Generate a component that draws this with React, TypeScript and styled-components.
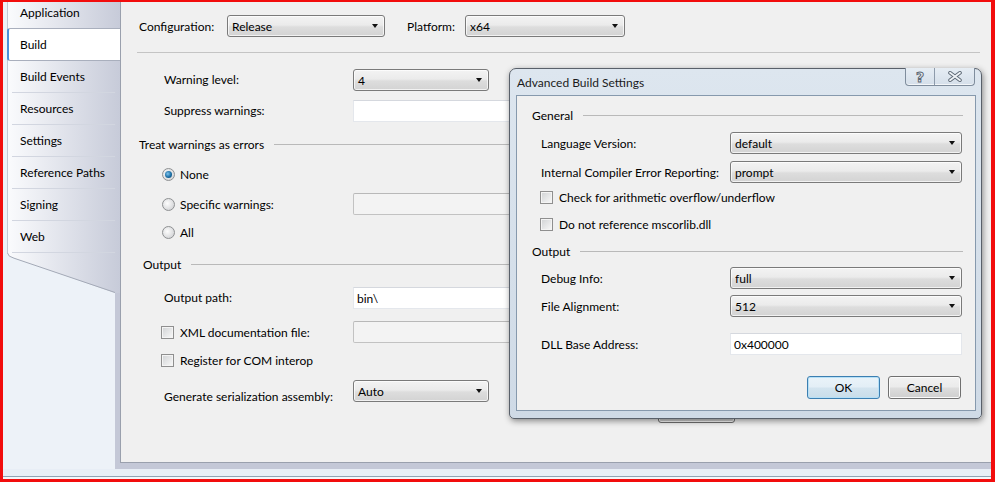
import React from "react";
import styled, { createGlobalStyle } from "styled-components";

const GlobalStyle = createGlobalStyle`
  html, body {
    margin: 0;
    padding: 0;
  }
  body {
    font-family: "Lato", "Liberation Sans", sans-serif;
    font-size: 12px;
    color: #000;
  }
  * {
    box-sizing: border-box;
  }
`;

const tabs = [
  "Application",
  "Build",
  "Build Events",
  "Resources",
  "Settings",
  "Reference Paths",
  "Signing",
  "Web",
];

const App: React.FC = () => {
  return (
    <Window>
      <GlobalStyle />
      <MainRow>
        <Sidebar>
          <TabStrip>
            {tabs.map((tab) => (
              <Tab key={tab} $active={tab === "Build"}>
                {tab}
              </Tab>
            ))}
          </TabStrip>
          <Tail width="117" height="40" viewBox="0 0 117 40">
            <defs>
              <linearGradient id="tailFill" x1="4" y1="0" x2="117" y2="0" gradientUnits="userSpaceOnUse">
                <stop offset="0" stopColor="#fafbfd" />
                <stop offset="1" stopColor="#c7cbd9" />
              </linearGradient>
            </defs>
            <path d="M4,0 H117 V40 H112 L11,5 Q4.5,3.5 4,0 Z" fill="url(#tailFill)" />
            <path d="M4.5,0 Q4.8,3.6 11,5.2 L112,39.5" fill="none" stroke="#a3a9b6" />
          </Tail>
        </Sidebar>
        <PanelFrame>
          <Panel>
            <ConfigRow>
              <ConfigLabel $width={88}>Configuration:</ConfigLabel>
              <Select $width={158} value="Release" />
              <ConfigLabel $width={58} $gap={22}>
                Platform:
              </ConfigLabel>
              <Select $width={160} value="x64" />
            </ConfigRow>
            <Separator />

            <FormRow $top={16}>
              <FieldLabel>Warning level:</FieldLabel>
              <Select $width={136} value="4" />
            </FormRow>
            <FormRow $top={9}>
              <FieldLabel>Suppress warnings:</FieldLabel>
              <TextBox $width={420} />
            </FormRow>

            <GroupHeader $top={12} $indent={2}>
              <span>Treat warnings as errors</span>
              <GroupLine />
            </GroupHeader>
            <FormRow $top={9}>
              <OptionCell $indent={25} $width={216}>
                <Radio $checked />
                None
              </OptionCell>
            </FormRow>
            <FormRow $top={8}>
              <OptionCell $indent={25} $width={216}>
                <Radio />
                Specific warnings:
              </OptionCell>
              <TextBox $width={420} $disabled />
            </FormRow>
            <FormRow $top={6}>
              <OptionCell $indent={25} $width={216}>
                <Radio />
                All
              </OptionCell>
            </FormRow>

            <GroupHeader $top={11} $indent={6}>
              <span>Output</span>
              <GroupLine />
            </GroupHeader>
            <FormRow $top={13}>
              <FieldLabel>Output path:</FieldLabel>
              <TextBox $width={420}>bin\</TextBox>
            </FormRow>
            <FormRow $top={12}>
              <OptionCell $indent={24} $width={216}>
                <Checkbox />
                XML documentation file:
              </OptionCell>
              <TextBox $width={420} $disabled />
            </FormRow>
            <FormRow $top={6}>
              <OptionCell $indent={24} $width={216}>
                <Checkbox />
                Register for COM interop
              </OptionCell>
            </FormRow>
            <FormRow $top={9}>
              <FieldLabel $drop={12}>Generate serialization assembly:</FieldLabel>
              <Select $width={136} value="Auto" />
            </FormRow>
            <AdvancedRow>
              <PushButton $width={77} $height={21}>
                Advanced...
              </PushButton>
            </AdvancedRow>
          </Panel>
        </PanelFrame>
      </MainRow>
      <Footer />

      <Dialog>
        <TitleBar>
          <Title>Advanced Build Settings</Title>
          <CaptionGroup>
            <CaptionButton $width={28}>
              <HelpGlyph>?</HelpGlyph>
            </CaptionButton>
            <CaptionButton $width={40} $last>
              <svg width="14" height="11" viewBox="0 0 14 11">
                <path d="M2,1.8 L12,9.2 M12,1.8 L2,9.2" stroke="#5d6875" strokeWidth="3.6" strokeLinecap="round" />
                <path d="M2,1.8 L12,9.2 M12,1.8 L2,9.2" stroke="#eef2f6" strokeWidth="1.8" strokeLinecap="round" />
              </svg>
            </CaptionButton>
          </CaptionGroup>
        </TitleBar>
        <Client>
          <GroupHeader $top={9} $indent={0}>
            <span>General</span>
            <GroupLine />
          </GroupHeader>
          <FormRow $top={7}>
            <DialogLabel>Language Version:</DialogLabel>
            <Select $width={232} value="default" />
          </FormRow>
          <FormRow $top={7}>
            <DialogLabel>Internal Compiler Error Reporting:</DialogLabel>
            <Select $width={232} value="prompt" />
          </FormRow>
          <FormRow $top={3}>
            <OptionCell $indent={8}>
              <Checkbox />
              Check for arithmetic overflow/underflow
            </OptionCell>
          </FormRow>
          <FormRow $top={5}>
            <OptionCell $indent={8}>
              <Checkbox />
              Do not reference mscorlib.dll
            </OptionCell>
          </FormRow>

          <GroupHeader $top={6} $indent={0}>
            <span>Output</span>
            <GroupLine />
          </GroupHeader>
          <FormRow $top={6}>
            <DialogLabel>Debug Info:</DialogLabel>
            <Select $width={232} value="full" />
          </FormRow>
          <FormRow $top={6}>
            <DialogLabel>File Alignment:</DialogLabel>
            <Select $width={232} value="512" />
          </FormRow>
          <FormRow $top={16}>
            <DialogLabel>DLL Base Address:</DialogLabel>
            <TextBox $width={232}>0x400000</TextBox>
          </FormRow>

          <ButtonRow>
            <PushButton $width={73} $height={23} $default>
              OK
            </PushButton>
            <PushButton $width={73} $height={23}>
              Cancel
            </PushButton>
          </ButtonRow>
        </Client>
      </Dialog>
    </Window>
  );
};

export default App;

interface SelectProps {
  $width: number;
  value: string;
}

const Select: React.FC<SelectProps> = ({ $width, value }) => (
  <SelectBox $width={$width}>
    <span>{value}</span>
    <Arrow />
  </SelectBox>
);

const Window = styled.div`
  position: relative;
  width: 995px;
  height: 482px;
  border-style: solid;
  border-color: #f20d0d;
  border-width: 2px 4px 3px 3px;
  background: #eef2f8;
  display: flex;
  flex-direction: column;
  overflow: hidden;
`;

const MainRow = styled.div`
  height: 467px;
  display: flex;
`;

const Sidebar = styled.div`
  width: 117px;
  flex-shrink: 0;
  display: flex;
  flex-direction: column;
  background: linear-gradient(to right, #edf2f8 112px, #c4c8d7 112px);
  overflow: hidden;
`;

const TabStrip = styled.div`
  margin: -5px 0 0 4px;
  border-left: 1px solid #c3c8d3;
  background: linear-gradient(to right, #fafbfd, #c7cbd9);
  display: flex;
  flex-direction: column;
`;

const Tab = styled.div<{ $active?: boolean }>`
  height: ${({ $active }) => ($active ? "33px" : "32px")};
  display: flex;
  align-items: center;
  white-space: nowrap;
  ${({ $active }) =>
    $active
      ? `
    margin: -1px 0 0 -1px;
    padding-left: 11px;
    background: #fff;
    border-left: 2px solid #4a8fd8;
    border-top: 1px solid #a9afbd;
    border-bottom: 1px solid #a9afbd;
    border-radius: 3px 0 0 3px;
  `
      : `
    margin: 0 5px 0 4px;
    padding-left: 8px;
    border-bottom: 1px solid #d2d6e0;
  `}
`;

const Tail = styled.svg`
  display: block;
  flex-shrink: 0;
`;

const PanelFrame = styled.div`
  flex: 1;
  display: flex;
  background: #c4c8d7;
  padding-bottom: 6px;
`;

const Panel = styled.div`
  position: relative;
  flex: 1;
  background: #f0f0f0;
  border-left: 1px solid #9aa0ad;
  border-bottom: 1px solid #9aa0ad;
  padding: 13px 11px 0 16px;
  display: flex;
  flex-direction: column;
`;

const Footer = styled.div`
  height: 10px;
  background: linear-gradient(
    to bottom,
    #e8eef6 7px,
    #8ea3b4 7px,
    #8ea3b4 8px,
    #f3f6fa 8px
  );
`;

const ConfigRow = styled.div`
  height: 22px;
  padding-left: 2px;
  display: flex;
  align-items: center;
`;

const ConfigLabel = styled.span<{ $width: number; $gap?: number }>`
  width: ${({ $width }) => $width}px;
  margin-left: ${({ $gap }) => $gap || 0}px;
  flex-shrink: 0;
`;

const Separator = styled.div`
  margin-top: 15px;
  height: 1px;
  background: #c4c4c4;
`;

const FormRow = styled.div<{ $top: number }>`
  height: 22px;
  margin-top: ${({ $top }) => $top}px;
  display: flex;
  align-items: center;
  white-space: nowrap;
`;

const FieldLabel = styled.span<{ $drop?: number }>`
  width: 216px;
  flex-shrink: 0;
  padding-left: 27px;
  padding-top: ${({ $drop }) => $drop || 0}px;
  line-height: 16px;
`;

const DialogLabel = styled.span`
  width: 198px;
  flex-shrink: 0;
  padding-left: 9px;
`;

const OptionCell = styled.label<{ $indent: number; $width?: number }>`
  width: ${({ $width }) => ($width ? `${$width}px` : "auto")};
  flex-shrink: 0;
  padding-left: ${({ $indent }) => $indent}px;
  display: flex;
  align-items: center;
`;

const GroupHeader = styled.div<{ $top: number; $indent: number }>`
  height: 20px;
  margin-top: ${({ $top }) => $top}px;
  padding-left: ${({ $indent }) => $indent}px;
  display: flex;
  align-items: center;
  gap: 10px;
  white-space: nowrap;
`;

const GroupLine = styled.div`
  flex: 1;
  height: 1px;
  background: #b9b9b9;
`;

const SelectBox = styled.div<{ $width: number }>`
  width: ${({ $width }) => $width}px;
  height: 22px;
  flex-shrink: 0;
  padding: 0 6px 0 4px;
  border: 1px solid #7a7a7a;
  border-radius: 3px;
  background: linear-gradient(#f3f3f3 0%, #ebebeb 45%, #dddddd 55%, #d3d3d3 100%);
  box-shadow: inset 0 0 0 1px rgba(255, 255, 255, 0.7);
  display: flex;
  align-items: center;
  justify-content: space-between;
`;

const Arrow = styled.span`
  width: 0;
  height: 0;
  border-left: 3.5px solid transparent;
  border-right: 3.5px solid transparent;
  border-top: 4px solid #111;
`;

const TextBox = styled.div<{ $width: number; $disabled?: boolean }>`
  width: ${({ $width }) => $width}px;
  height: 22px;
  flex-shrink: 0;
  padding-left: 3px;
  display: flex;
  align-items: center;
  background: ${({ $disabled }) => ($disabled ? "#f3f3f3" : "#fff")};
  border: 1px solid ${({ $disabled }) => ($disabled ? "#c2c2c2" : "#e4e7ec")};
  border-top-color: ${({ $disabled }) => ($disabled ? "#b8b8b8" : "#d5d8de")};
  border-radius: ${({ $disabled }) => ($disabled ? "2px" : "0")};
`;

const Radio = styled.span<{ $checked?: boolean }>`
  width: 13px;
  height: 13px;
  margin-right: 5px;
  border-radius: 50%;
  border: 1px solid #8e9092;
  background: radial-gradient(circle at 40% 40%, #fdfdfd, #d6d7d9 75%);
  display: flex;
  align-items: center;
  justify-content: center;
  flex-shrink: 0;

  &::after {
    content: "";
    display: ${({ $checked }) => ($checked ? "block" : "none")};
    width: 7px;
    height: 7px;
    border-radius: 50%;
    background: radial-gradient(circle at 40% 40%, #7fc3ec, #1b6ea5 55%, #0d3f62);
  }
`;

const Checkbox = styled.span`
  width: 13px;
  height: 13px;
  margin-right: 6px;
  border: 1px solid #8f8f8f;
  background: linear-gradient(135deg, #d0d2d4, #f9f9f9);
  box-shadow: inset 0 0 0 1px #f4f4f4;
  flex-shrink: 0;
`;

const AdvancedRow = styled.div`
  display: flex;
  padding-left: 521px;
`;

const PushButton = styled.div<{ $width: number; $height: number; $default?: boolean }>`
  width: ${({ $width }) => $width}px;
  height: ${({ $height }) => $height}px;
  display: flex;
  align-items: center;
  justify-content: center;
  border: 1px solid ${({ $default }) => ($default ? "#3c7fb1" : "#707070")};
  border-radius: 3px;
  background: ${({ $default }) =>
    $default
      ? "linear-gradient(#eaf3f9 0%, #e3eef6 48%, #d3e4ef 52%, #c9dde9 100%)"
      : "linear-gradient(#f2f2f2 0%, #ebebeb 48%, #dddddd 52%, #cfcfcf 100%)"};
  box-shadow: inset 0 0 0 1px ${({ $default }) => ($default ? "#b6e0f7" : "#fbfbfb")};
`;

const Dialog = styled.div`
  position: absolute;
  left: 506px;
  top: 66px;
  width: 473px;
  height: 351px;
  padding: 0 5px 7px 6px;
  border: 1px solid #59606a;
  border-radius: 7px 7px 5px 5px;
  background: linear-gradient(#dde6ef, #cfdae6);
  box-shadow: 1px 2px 6px rgba(0, 0, 0, 0.45);
  display: flex;
  flex-direction: column;
`;

const TitleBar = styled.div`
  height: 26px;
  flex-shrink: 0;
  display: flex;
  align-items: center;
  justify-content: space-between;
`;

const Title = styled.span`
  padding-left: 1px;
  color: #1b1b1b;
`;

const CaptionGroup = styled.div`
  align-self: flex-start;
  margin: -1px 1px 0 0;
  height: 18px;
  display: flex;
  border: 1px solid #7f8d9d;
  border-top: none;
  border-radius: 0 0 4px 4px;
  background: linear-gradient(#e6edf4, #d5dfea);
  box-shadow: inset 0 -1px 0 rgba(255, 255, 255, 0.7);
`;

const CaptionButton = styled.div<{ $width: number; $last?: boolean }>`
  width: ${({ $width }) => $width}px;
  display: flex;
  align-items: center;
  justify-content: center;
  border-left: ${({ $last }) => ($last ? "1px solid #8e9bab" : "none")};
`;

const HelpGlyph = styled.span`
  font-family: "DejaVu Sans", sans-serif;
  font-weight: bold;
  font-size: 14px;
  line-height: 1;
  color: #eef2f6;
  -webkit-text-stroke: 1px #5d6875;
`;

const Client = styled.div`
  flex: 1;
  background: #f0f0f0;
  border: 1px solid #8699ad;
  padding: 0 12px 0 15px;
  display: flex;
  flex-direction: column;
`;

const ButtonRow = styled.div`
  margin-top: 21px;
  padding-right: 2px;
  display: flex;
  justify-content: flex-end;
  gap: 8px;
`;
